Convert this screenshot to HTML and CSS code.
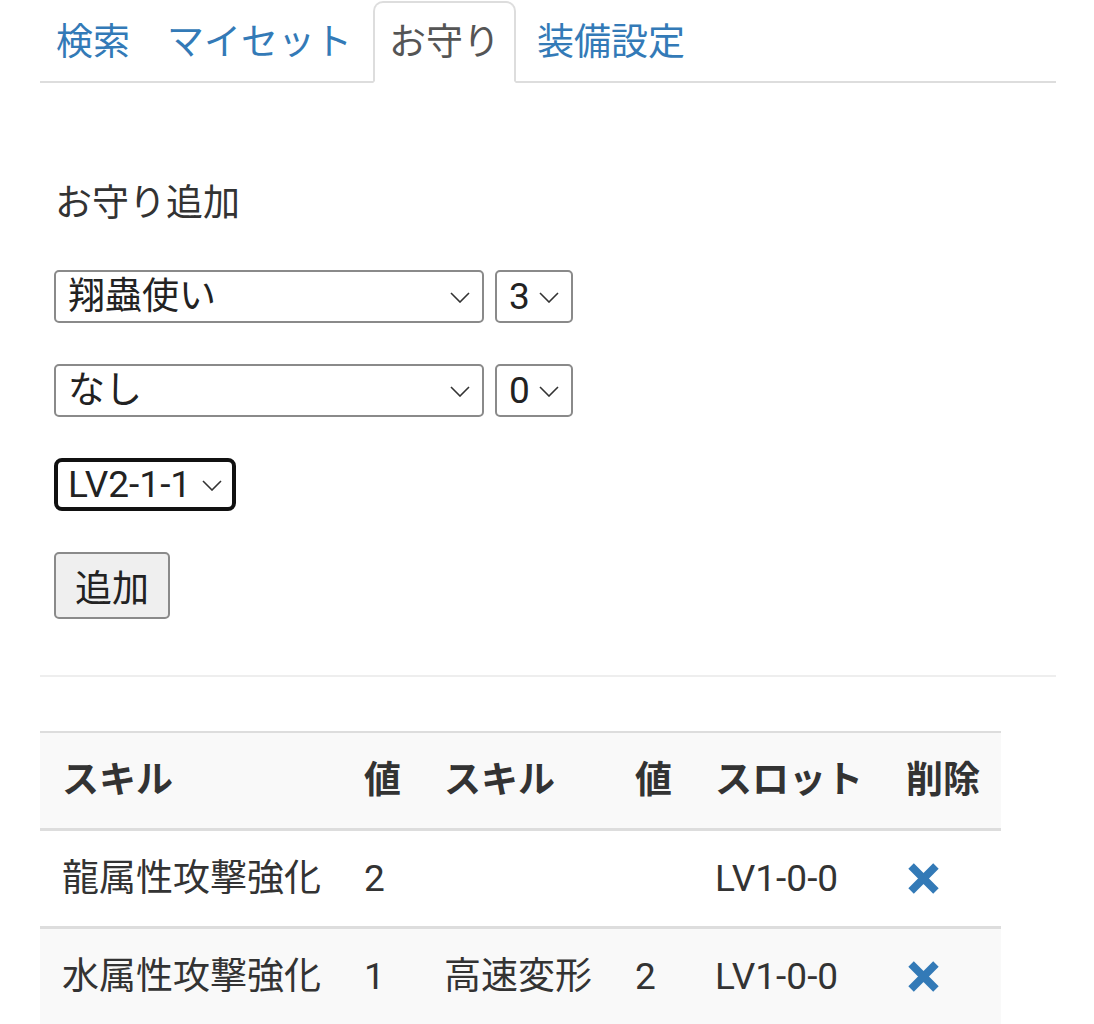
FILE: index.html
```html
<!DOCTYPE html>
<html lang="ja">
<head>
<meta charset="utf-8">
<title>お守り</title>
<link rel="stylesheet" href="styles.css">
</head>
<body>
<div class="container">
  <ul class="tabs">
    <li class="tab"><a href="#">検索</a></li>
    <li class="tab"><a href="#">マイセット</a></li>
    <li class="tab active"><a href="#">お守り</a></li>
    <li class="tab"><a href="#">装備設定</a></li>
  </ul>

  <div class="form">
    <h4 class="form-title">お守り追加</h4>
    <div class="row">
      <span class="sel sel-wide"><span class="sel-text">翔蟲使い</span><svg class="chev" viewBox="0 0 20 11"><path d="M1 1l9 9 9-9" fill="none" stroke="#333" stroke-width="1.6"/></svg></span>
      <span class="sel sel-num"><span class="sel-text">3</span><svg class="chev" viewBox="0 0 20 11"><path d="M1 1l9 9 9-9" fill="none" stroke="#333" stroke-width="1.6"/></svg></span>
    </div>
    <div class="row">
      <span class="sel sel-wide"><span class="sel-text">なし</span><svg class="chev" viewBox="0 0 20 11"><path d="M1 1l9 9 9-9" fill="none" stroke="#333" stroke-width="1.6"/></svg></span>
      <span class="sel sel-num"><span class="sel-text">0</span><svg class="chev" viewBox="0 0 20 11"><path d="M1 1l9 9 9-9" fill="none" stroke="#333" stroke-width="1.6"/></svg></span>
    </div>
    <div class="row">
      <span class="sel sel-focus"><span class="sel-text">LV2-1-1</span><svg class="chev" viewBox="0 0 20 11"><path d="M1 1l9 9 9-9" fill="none" stroke="#333" stroke-width="1.6"/></svg></span>
    </div>
    <div class="row">
      <button class="btn" type="button">追加</button>
    </div>
  </div>

  <hr class="divider">

  <table class="table">
    <tr class="head">
      <th>スキル</th><th>値</th><th>スキル</th><th>値</th><th>スロット</th><th>削除</th>
    </tr>
    <tr>
      <td>龍属性攻撃強化</td><td>2</td><td></td><td></td><td>LV1-0-0</td>
      <td><svg class="del" viewBox="0 0 32 32"><path d="M6 6L26 26M26 6L6 26" stroke="#337ab7" stroke-width="8" stroke-linecap="square"/></svg></td>
    </tr>
    <tr class="striped">
      <td>水属性攻撃強化</td><td>1</td><td>高速変形</td><td>2</td><td>LV1-0-0</td>
      <td><svg class="del" viewBox="0 0 32 32"><path d="M6 6L26 26M26 6L6 26" stroke="#337ab7" stroke-width="8" stroke-linecap="square"/></svg></td>
    </tr>
  </table>
</div>
</body>
</html>
```

FILE: styles.css
```css
html, body {
  margin: 0;
  padding: 0;
  background: #fff;
}
body {
  font-family: "Roboto", "Noto Sans CJK JP", sans-serif;
  font-size: 37px;
  line-height: 53px;
  color: #333;
}
.container {
  padding: 1px 38px 0 40px;
}
.tabs {
  list-style: none;
  margin: 0;
  padding: 0;
  display: flex;
  border-bottom: 2px solid #ddd;
}
.tab {
  margin-right: 5px;
  margin-bottom: -2px;
}
.tab a {
  display: block;
  padding: 13px 14px 12px;
  border: 2px solid transparent;
  border-radius: 10px 10px 0 0;
  color: #337ab7;
  text-decoration: none;
  font-size: 37px;
  line-height: 53px;
}
.tab.active a {
  color: #555;
  background: #fff;
  border-color: #ddd;
  border-bottom-color: transparent;
}
.form {
  padding: 94px 0 0 14px;
}
.form-title {
  margin: 0 0 40px 1px;
  font-size: 37px;
  font-weight: 400;
  line-height: 53px;
}
.row {
  display: flex;
  gap: 11px;
  margin-bottom: 41px;
}
.row:last-child {
  margin-bottom: 0;
}
.sel {
  position: relative;
  box-sizing: border-box;
  display: flex;
  align-items: center;
  height: 53px;
  border: 2px solid #8a8a8a;
  border-radius: 5px;
  padding-left: 12px;
  background: #fff;
}
.sel-wide { width: 430px; }
.sel-num { width: 78px; }
.sel-focus {
  width: 182px;
  border: 4px solid #111;
  border-radius: 8px;
  padding-left: 10px;
}
.sel-text {
  font-size: 37px;
  line-height: 49px;
  color: #222;
}
.chev {
  position: absolute;
  right: 12px;
  top: 50%;
  width: 20px;
  height: 11px;
  margin-top: -5px;
}
.sel-focus .chev { right: 10px; }
.btn {
  box-sizing: border-box;
  width: 116px;
  height: 67px;
  background: #efefef;
  border: 2px solid #8a8a8a;
  border-radius: 5px;
  font-family: "Roboto", "Noto Sans CJK JP", sans-serif;
  font-size: 37px;
  color: #222;
  padding: 0;
}
.divider {
  margin: 56px 0 0 0;
  border: 0;
  border-top: 2px solid #eee;
}
.table {
  margin-top: 54px;
  border-collapse: collapse;
}
.table th, .table td {
  padding: 21px 21px 21px 22px;
  text-align: left;
  vertical-align: middle;
  line-height: 53px;
  white-space: nowrap;
}
.table th {
  font-weight: 700;
}
.table tr.head {
  background: #f9f9f9;
  border-top: 2px solid #ddd;
  border-bottom: 3px solid #ddd;
}
.table tr {
  border-top: 2px solid #ddd;
}
.table tr.striped {
  background: #f9f9f9;
  border-top: 3px solid #ddd;
}
.del {
  display: block;
  width: 31px;
  height: 31px;
  margin-left: 2px;
}
```
